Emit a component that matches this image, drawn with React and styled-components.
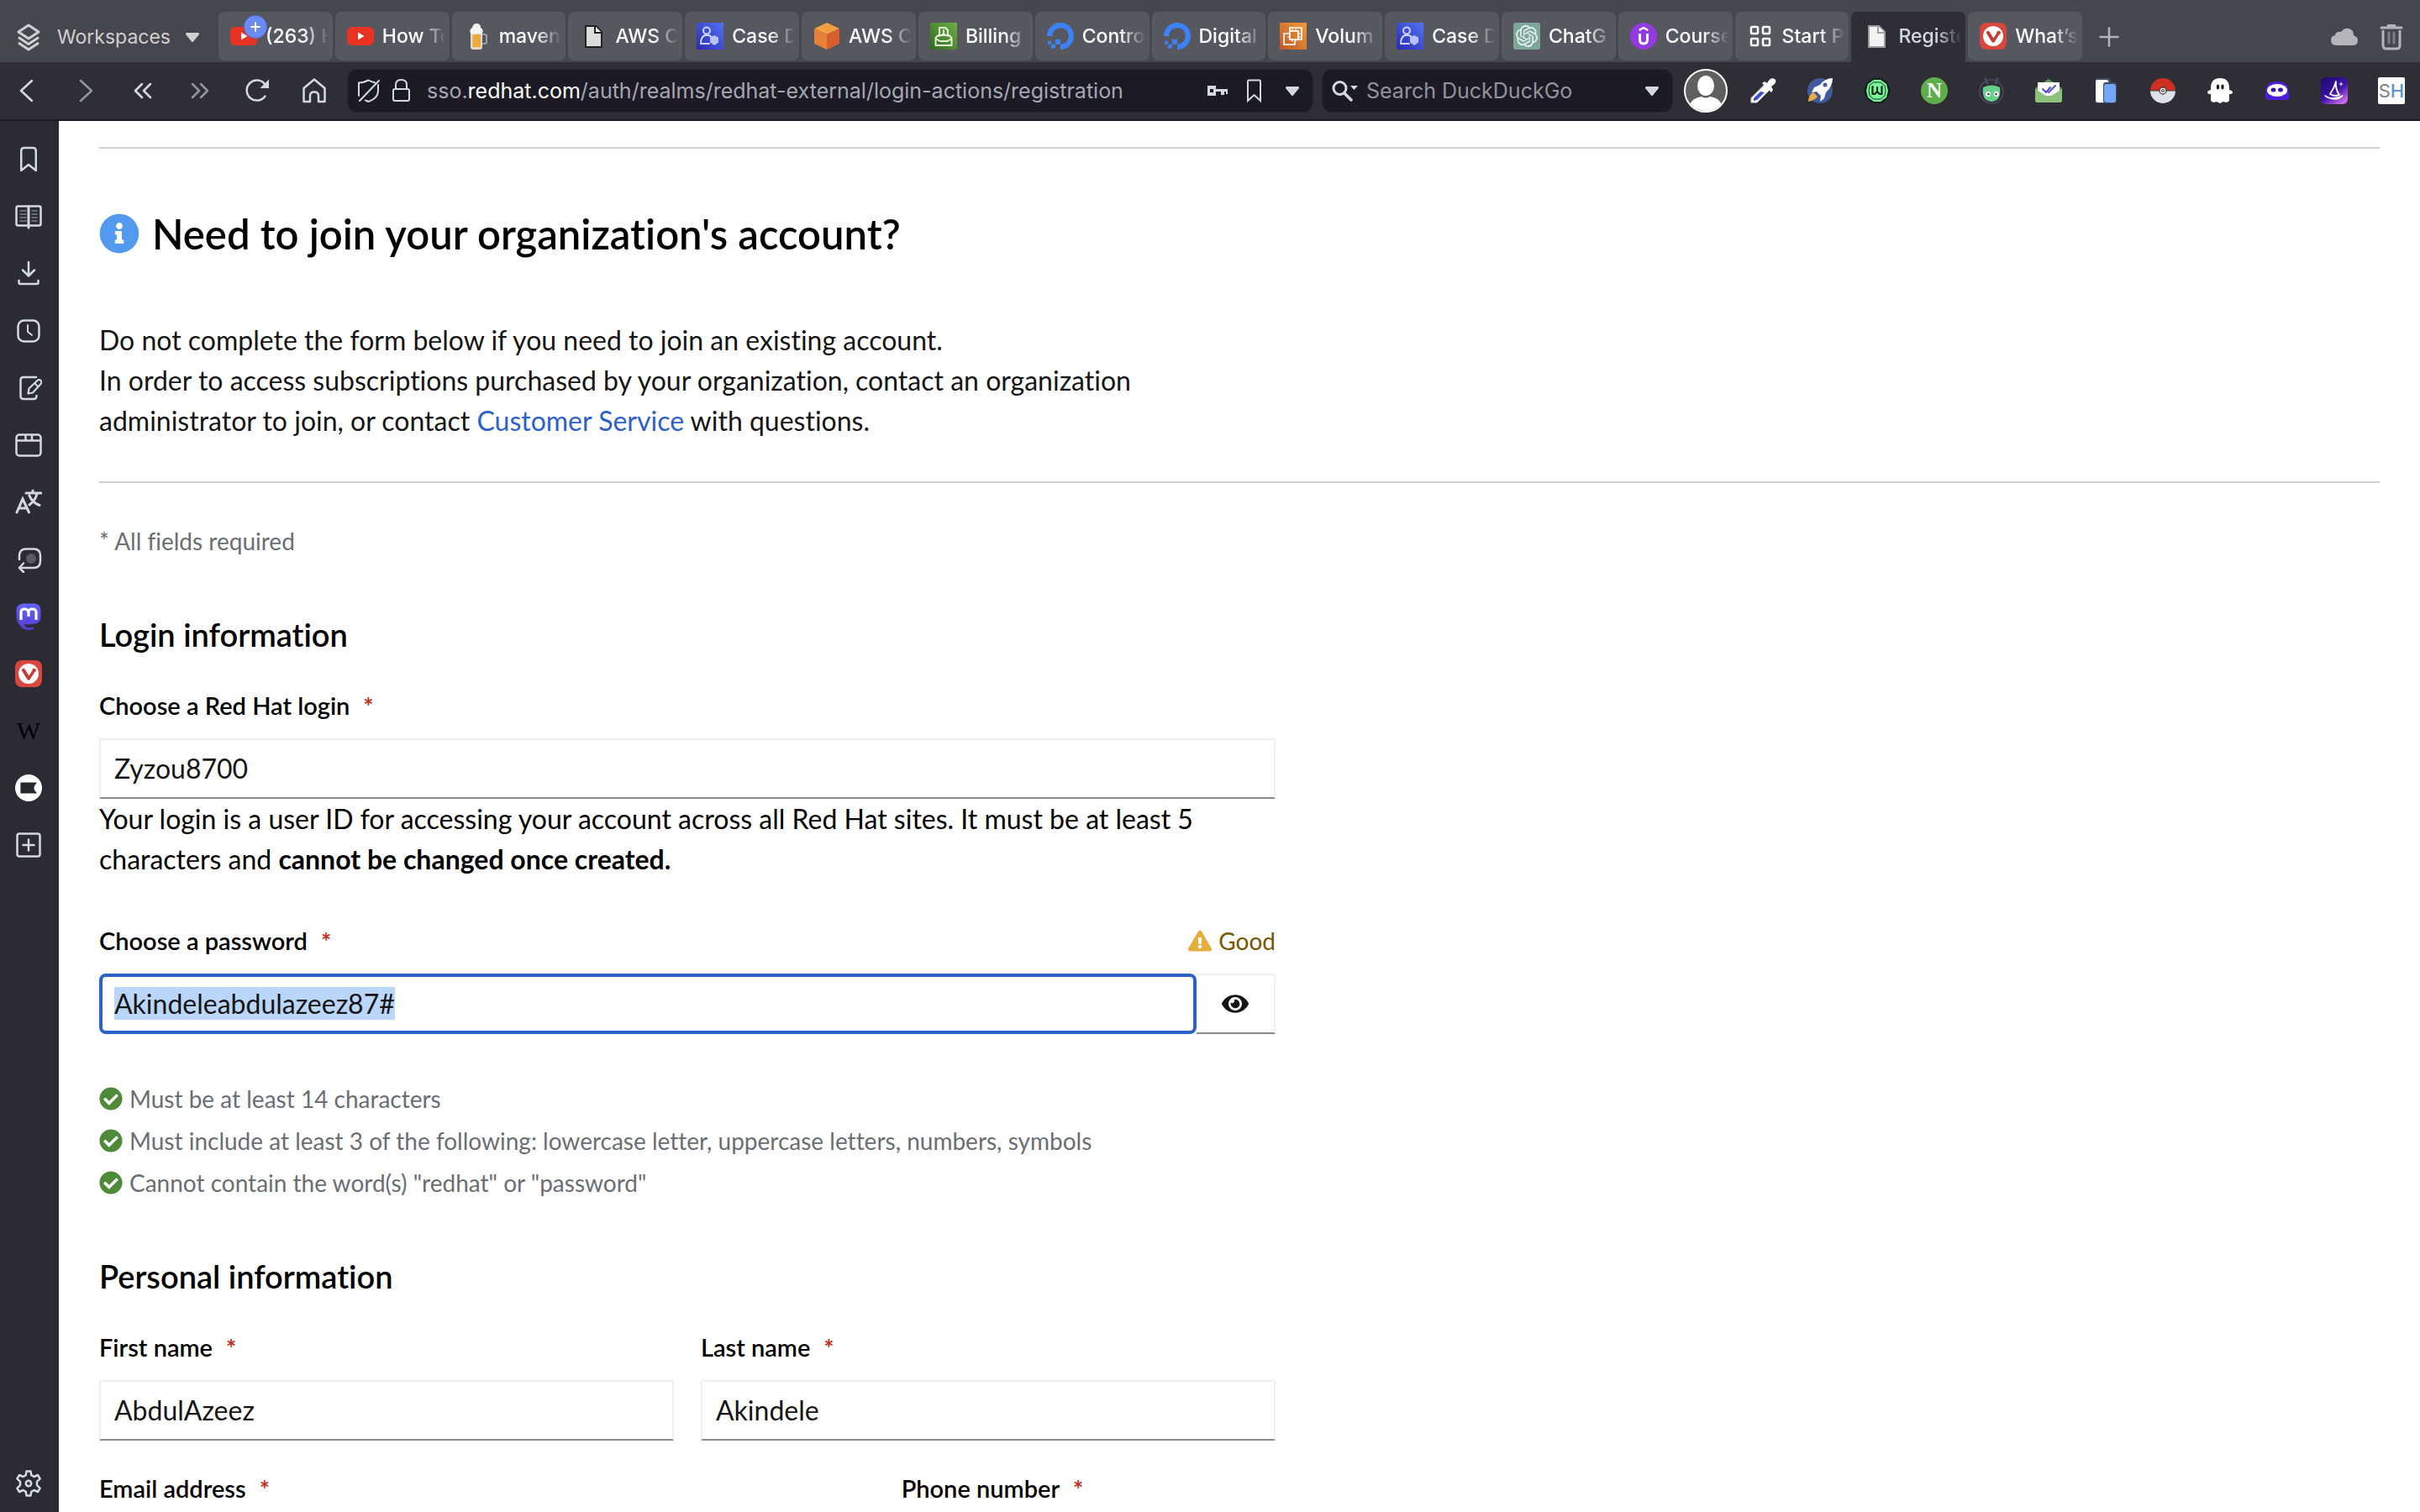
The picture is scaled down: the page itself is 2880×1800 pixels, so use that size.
import React, { useEffect, useRef } from "react";
import styled, { createGlobalStyle, css } from "styled-components";
import { FaInfoCircle, FaCheckCircle, FaExclamationTriangle, FaEye } from "react-icons/fa";
import { SiOpenai, SiDigitalocean } from "react-icons/si";

const uiFont = 'Inter, "Liberation Sans", sans-serif';
const bodyFont = 'Lato, "Open Sans", sans-serif';

const GlobalStyle = createGlobalStyle`
  *, *::before, *::after { box-sizing: border-box; }
  body { margin: 0; background: #fff; }
  button { font: inherit; color: inherit; background: none; border: 0; padding: 0; cursor: pointer; }
  h1, h2, p, ul { margin: 0; padding: 0; }
  svg { display: block; flex: none; }
`;

/* ---------- browser chrome ---------- */

const Window = styled.div`
  display: flex;
  flex-direction: column;
  height: 100vh;
  overflow: hidden;
  font-family: ${uiFont};
`;

const TabBar = styled.header`
  display: flex;
  align-items: flex-end;
  height: 74px;
  flex: none;
  background: #46464f;
  color: #b4b4b9;
`;

const Workspaces = styled.button`
  display: flex;
  align-items: center;
  width: 260px;
  height: 60px;
  padding-left: 18px;
  gap: 18px;
  font-size: 23px;
  color: #d0d0d0;
`;

const Tabs = styled.nav`
  display: flex;
  flex: 0 1 2218px;
  min-width: 0;
  gap: 3px;
`;

const Tab = styled.button`
  position: relative;
  display: flex;
  flex: 1 1 0;
  min-width: 0;
  align-items: center;
  gap: 10px;
  height: 58px;
  margin-bottom: 2px;
  padding: 0 6px 0 14px;
  border-radius: 7px;
  background: #57575f;
  color: #fff;
  font-size: 23px;
  font-weight: 500;
  text-align: left;
  ${(p) =>
    p.$active &&
    css`
      height: 60px;
      margin-bottom: 0;
      padding-bottom: 2px;
      border-radius: 7px 7px 0 0;
      background: #2f2e37;
      color: #d5d8e3;
    `}
`;

const TabTitle = styled.span`
  flex: 1;
  min-width: 0;
  overflow: hidden;
  white-space: nowrap;
  line-height: 32px;
  mask-image: linear-gradient(to right, #000 60%, transparent 102%);
`;

const Badge = styled.span`
  position: absolute;
  left: 30px;
  top: 4px;
  display: flex;
  width: 28px;
  height: 28px;
  border-radius: 50%;
  background: #6b8cf5;
  border: 1px solid #4f6fd8;
  align-items: center;
  justify-content: center;
`;

const BarButton = styled.button`
  display: flex;
  align-items: center;
  justify-content: center;
  width: ${(p) => p.$w || 64}px;
  height: 60px;
  flex: none;
`;

const Spacer = styled.div`
  flex: 1;
`;

const Toolbar = styled.div`
  display: flex;
  align-items: center;
  height: 70px;
  flex: none;
  background: #2f2e37;
  border-bottom: 2px solid #1c1b25;
  color: #d5d8e3;
`;

const NavButtons = styled.div`
  display: flex;
  flex: none;
  width: 414px;
`;

const NavButton = styled.button`
  display: flex;
  align-items: center;
  justify-content: center;
  width: 68px;
  height: 52px;
  opacity: ${(p) => (p.$dim ? 0.6 : 1)};
`;

const Field = styled.div`
  display: flex;
  align-items: center;
  height: 50px;
  border-radius: 11px;
  background: #1c1b25;
  box-shadow: 0 0 0 1px #272630;
  font-size: 25px;
`;

const AddressField = styled(Field)`
  flex: 1;
  min-width: 0;
  padding: 0 16px 0 8px;
`;

const SearchField = styled(Field)`
  flex: none;
  width: 416px;
  margin-left: 12px;
  padding: 0 16px 0 10px;
`;

const Address = styled.a`
  flex: 1;
  padding-left: 15px;
  color: #a5a7b1;
  text-decoration: none;
  white-space: nowrap;
  b {
    color: #fff;
    font-weight: 400;
  }
`;

const IconGap = styled.span`
  width: ${(p) => p.$w}px;
  flex: none;
`;

const SearchInput = styled.input`
  flex: 1;
  min-width: 0;
  margin-left: 10px;
  padding: 0;
  border: 0;
  outline: 0;
  background: none;
  font: 25px ${uiFont};
  color: #fff;
  &::placeholder {
    color: #92949d;
    opacity: 1;
  }
`;

const Extensions = styled.div`
  display: flex;
  flex: none;
  padding-left: 6px;
`;

const Extension = styled.button`
  display: flex;
  align-items: center;
  justify-content: center;
  width: 68px;
  height: 54px;
`;

const Body = styled.div`
  display: flex;
  flex: 1;
  min-height: 0;
`;

const Panel = styled.aside`
  display: flex;
  flex-direction: column;
  flex: none;
  width: 70px;
  padding: 12px 0 0;
  background: #2c2b34;
  border-right: 2px solid #292930;
  color: #d5d8e3;
`;

const PanelButton = styled.button`
  display: flex;
  align-items: center;
  justify-content: center;
  height: 68px;
  flex: none;
`;

/* ---------- page ---------- */

const Page = styled.main`
  flex: 1;
  min-width: 0;
  overflow: hidden;
  padding: 31px 48px 0;
  background: #fff;
  font-family: ${bodyFont};
  font-size: 32px;
  font-variant-ligatures: none;
  line-height: 48px;
  color: #151515;
`;

const Rule = styled.hr`
  height: 2px;
  margin: 0;
  border: 0;
  background: #d2d2d2;
`;

const Title = styled.h1`
  display: flex;
  align-items: center;
  gap: 15px;
  margin: 69px 0 71px;
  font-size: 49px;
  font-weight: 600;
  line-height: 64px;
  color: #000;
  svg {
    color: #519aef;
  }
`;

const Intro = styled.p`
  max-width: 1400px;
  margin-bottom: 48px;
`;

const Link = styled.a`
  color: #2b62c9;
  text-decoration: none;
`;

const Note = styled.p`
  margin-top: 48px;
  font-size: 28px;
  line-height: 42px;
  color: #6a6e73;
`;

const Form = styled.form`
  max-width: 1400px;
`;

const SectionTitle = styled.h2`
  margin: 66px 0 40px;
  font-size: 38px;
  font-weight: 600;
  line-height: 48px;
  color: #000;
`;

const LabelRow = styled.div`
  display: flex;
  justify-content: space-between;
  margin-top: ${(p) => p.$top || 0}px;
  margin-bottom: 18px;
  font-size: 28px;
  line-height: 42px;
`;

const Label = styled.label`
  font-size: 29px;
  font-weight: 600;
  color: #000;
  span {
    margin-left: 16px;
    font-weight: 700;
    color: #c0301c;
  }
`;

const Strength = styled.output`
  display: flex;
  align-items: center;
  gap: 8px;
  color: #795600;
  svg {
    color: #e6ad3c;
  }
`;

const inputBox = css`
  height: 72px;
  border: 2px solid #f0f0f0;
  border-bottom-color: #8a8a90;
  background: #fff;
`;

const TextInput = styled.input`
  display: block;
  width: 100%;
  min-width: 0;
  padding: 0 16px 2px;
  border-radius: 0;
  outline: 0;
  font-family: ${bodyFont};
  font-size: 32px;
  line-height: 44px;
  color: #151515;
  ${inputBox}
  &:focus {
    padding: 0 14px 2px;
    border: 4px solid #2b62c9;
    border-radius: 8px;
  }
  &::selection {
    background: #bad6fb;
    color: #151515;
  }
`;

const InputGroup = styled.div`
  display: flex;
`;

const RevealButton = styled.button`
  display: flex;
  align-items: center;
  justify-content: center;
  flex: none;
  width: 94px;
  color: #151515;
  && {
    ${inputBox}
    border-left: 0;
  }
`;

const Help = styled.p`
  color: #000;
`;

const Rules = styled.ul`
  display: grid;
  gap: 8px;
  margin-top: 56px;
  list-style: none;
  font-size: 28px;
  line-height: 42px;
  color: #6a6e73;
`;

const RuleItem = styled.li`
  display: flex;
  align-items: center;
  gap: 8px;
  svg {
    color: #4f8a3a;
  }
`;

const FieldGrid = styled.div`
  display: grid;
  grid-template-columns: repeat(12, 1fr);
  gap: 36px 32px;
`;

const Cell = styled.div`
  grid-column: span ${(p) => p.$span};
`;

/* ---------- drawings ---------- */

const Svg = ({ s = 32, w, h, vb = "0 0 32 32", sw = 2.5, children }) => (
  <svg width={w || s} height={h || s} viewBox={vb} fill="none" stroke="currentColor" strokeWidth={sw} strokeLinejoin="round" strokeLinecap="round" aria-hidden="true">
    {children}
  </svg>
);

const Caret = ({ w = 16, h = 11 }) => (
  <svg width={w} height={h} viewBox="0 0 16 11" aria-hidden="true">
    <path d="M1 0h14q1 0 1 2L9 10.500q-1 1-2 0L0 2Q0 0 1 0z" fill="currentColor" />
  </svg>
);

const Youtube = () => (
  <Svg>
    <rect x="0" y="5" width="32" height="22" rx="6" fill="#e83323" stroke="none" />
    <path d="M13 11.500v9l7.500-4.500z" fill="#fff" stroke="none" />
  </Svg>
);

const Beer = () => (
  <Svg>
    <path d="M21 14h4q2 0 2 2v7q0 2-2 2h-4" stroke="#9fa0a6" strokeWidth="2" />
    <path d="M8 10h14v19q0 3-3 3h-8q-3 0-3-3z" fill="#e3d9c6" stroke="none" />
    <path d="M10.500 14h9.500v15h-9.500z" fill="#eda93d" stroke="none" />
    <path d="M8 13q-2-5 2-7 1-5 5-5 5 0 5 5 4 2 2 7-3 1.500-5-.5-4 2.500-9 .5z" fill="#f4f4f4" stroke="none" />
  </Svg>
);

const Doc = ({ light }) => (
  <Svg>
    <path d="M7 4h12l7 7v18H7z" fill={light ? "#f3f3f3" : "#dcdcdc"} stroke={light ? "#9c9c9c" : "#222"} strokeWidth="2" strokeLinejoin="miter" />
    <path d="M18 4v8h8" fill="#fff" stroke={light ? "#9c9c9c" : "#222"} strokeWidth="2" strokeLinejoin="miter" />
  </Svg>
);

const SupportCase = () => (
  <Svg>
    <defs>
      <linearGradient id="caseFill" x1="0" y1="1" x2="1" y2="0">
        <stop offset="0" stopColor="#2a2aaf" />
        <stop offset="1" stopColor="#5273f4" />
      </linearGradient>
    </defs>
    <rect width="32" height="32" fill="url(#caseFill)" stroke="none" />
    <circle cx="12" cy="9.500" r="4" stroke="#cdd3ff" strokeWidth="2" />
    <path d="M15 25H5q0-8 5-10h5q2 1 3 3" stroke="#cdd3ff" strokeWidth="2" />
    <path d="M21 15l5 2.500v6L21 27l-5-3.500v-6z" fill="#b9c1fb" stroke="none" />
  </Svg>
);

const Cube = () => (
  <Svg>
    <path d="M16 0l15 7-15 7L1 7z" fill="#f29f45" stroke="none" />
    <path d="M1 7l15 7v18L1 25z" fill="#e68138" stroke="none" />
    <path d="M31 7l-15 7v18l15-7z" fill="#d65f2c" stroke="none" />
  </Svg>
);

const Billing = () => (
  <Svg>
    <defs>
      <linearGradient id="billFill" x1="0" y1="1" x2="1" y2="0">
        <stop offset="0" stopColor="#316a20" />
        <stop offset="1" stopColor="#6fae47" />
      </linearGradient>
    </defs>
    <rect width="32" height="32" fill="url(#billFill)" stroke="none" />
    <path d="M11 16V6h7l3 3v7M6.500 18l3-3h13l3 3M6.500 18v9h19v-9M6.500 19l5 3h9l5-3M16 9v3M14 15q2-4 4 0" stroke="#e4f2da" strokeWidth="2" />
  </Svg>
);

const Ocean = () => <SiDigitalocean size={32} color="#3b82f7" />;

const Volumes = () => (
  <Svg>
    <defs>
      <linearGradient id="volFill" x1="0" y1="1" x2="1" y2="0">
        <stop offset="0" stopColor="#bf5a28" />
        <stop offset="1" stopColor="#f09b38" />
      </linearGradient>
    </defs>
    <rect width="32" height="32" fill="url(#volFill)" stroke="none" />
    <path d="M12 10V6h14v14h-4M10 13H5v13h13v-4" stroke="#fff" strokeWidth="1.700" />
    <rect x="12" y="10" width="10" height="10" stroke="#fff" strokeWidth="1.700" />
    <path d="M15 8v2M19 8v2M15 20v2M19 20v2M10 13h2M10 17h2M22 13h2M22 17h2" stroke="#fff" strokeWidth="1.400" />
  </Svg>
);

const ChatFav = styled.span`
  display: grid;
  place-items: center;
  flex: none;
  width: 32px;
  height: 32px;
  border-radius: 3px;
  background: #7da79b;
  color: #e6f0ed;
`;

const Udemy = () => (
  <Svg>
    <circle cx="16" cy="16" r="16" fill="#933be0" stroke="none" />
    <path d="M11.500 8.500L16 6l4.500 2.500" stroke="#fff" strokeWidth="2.500" />
    <path d="M11.500 13v7q0 5 4.500 5t4.500-5v-7" stroke="#fff" strokeWidth="3" strokeLinecap="butt" />
  </Svg>
);

const Grid4 = () => (
  <Svg sw={2.5}>
    {[[5, 5], [19, 5], [5, 19], [19, 19]].map(([x, y]) => (
      <rect key={`${x}-${y}`} x={x} y={y} width="8" height="8" rx="1" />
    ))}
  </Svg>
);

const Vivaldi = () => (
  <Svg>
    <rect width="32" height="32" rx="8" fill="#d9463e" stroke="none" />
    <circle cx="16" cy="16" r="12" fill="#fff" stroke="none" />
    <path d="M10 12l6 9.500" stroke="#c73b36" strokeWidth="4.200" />
    <path d="M16.500 21.500q4-6 6-9.500" stroke="#c73b36" strokeWidth="3.400" />
    <circle cx="22.600" cy="12" r="2.200" fill="#c73b36" stroke="none" />
  </Svg>
);

const Mastodon = () => (
  <Svg>
    <defs>
      <linearGradient id="mastoFill" x1="0" y1="0" x2="0" y2="1">
        <stop offset="0" stopColor="#6364ff" />
        <stop offset="1" stopColor="#563acc" />
      </linearGradient>
    </defs>
    <path d="M9 .500h14q7.500 1 7.500 8v8q0 7-6.500 8-6 1.500-13 .5 0 4 6 4 3 0 5-.5v2.500q-3 1-6 1-7-.5-10-5-4.500-5-4.500-12V9q0-7.500 7.500-8.500z" fill="url(#mastoFill)" stroke="none" />
    <path d="M7 20v-9q0-4 4-4t5 4v5M16 11q0-4 4.500-4t4.500 4v9" stroke="#fff" strokeWidth="3.200" strokeLinecap="butt" />
  </Svg>
);

const favicons = {
  youtube: <Youtube />,
  beer: <Beer />,
  doc: <Doc />,
  docLight: <Doc light />,
  support: <SupportCase />,
  cube: <Cube />,
  billing: <Billing />,
  ocean: <Ocean />,
  volumes: <Volumes />,
  chat: (
    <ChatFav>
      <SiOpenai size={26} />
    </ChatFav>
  ),
  udemy: <Udemy />,
  grid: <Grid4 />,
  vivaldi: <Vivaldi />,
};

const tabs = [
  ["youtube", "(263) H"],
  ["youtube", "How To"],
  ["beer", "maven"],
  ["doc", "AWS C"],
  ["support", "Case D"],
  ["cube", "AWS C"],
  ["billing", "Billing"],
  ["ocean", "Contro"],
  ["ocean", "Digital"],
  ["volumes", "Volum"],
  ["support", "Case D"],
  ["chat", "ChatG"],
  ["udemy", "Course"],
  ["grid", "Start P"],
  ["docLight", "Registe"],
  ["vivaldi", "What’s"],
];

const StackIcon = () => (
  <Svg w={32} h={34} vb="0 0 32 34" sw={3}>
    <path d="M16 3l12 8-12 8-12-8z" />
    <path d="M4 17.500l12 8 12-8M4 24l12 8 12-8" strokeLinecap="butt" />
  </Svg>
);

const extensions = [
  ["Profile", (
    <svg key="p" width="54" height="54" viewBox="0 0 54 54">
      <clipPath id="face"><circle cx="27" cy="27" r="24" /></clipPath>
      <circle cx="27" cy="27" r="25" fill="#5f5f5f" stroke="#fff" strokeWidth="2" />
      <g clipPath="url(#face)" fill="#fff">
        <ellipse cx="27" cy="21" rx="10" ry="12" />
        <path d="M6 54q0-18 16-20 5 3 10 0 16 2 16 20z" />
      </g>
    </svg>
  )],
  ["Color picker", (
    <Svg>
      <path d="M18 9l6 6L9 30H2v-5z" fill="#fff" stroke="#d8d8de" strokeWidth="1" />
      <path d="M13 17l5 1-9 9-4 1v-3z" fill="#3850c8" stroke="none" />
      <path d="M15 7l3-2 3 2q4-8 9-5 4 4-4 9l2 4-2 3z" fill="#fff" stroke="none" />
    </Svg>
  )],
  ["Rocket", (
    <Svg>
      <circle cx="16" cy="16" r="15" fill="#425a9c" stroke="none" />
      <path d="M31 1q-9 0-15 8l-7 3-3 6 6-1 5 5-1 7 5-4 2-7q8-7 8-17z" fill="#fff" stroke="none" />
      <path d="M8 18q-6 3-6 11 8-2 11-6z" fill="#f0ae3e" stroke="none" />
      <circle cx="22" cy="9" r="2.500" fill="#425a9c" stroke="none" />
    </Svg>
  )],
  ["Shield W", (
    <Svg>
      <path d="M11 1h10l8 6 3 9-3 9-8 6H11l-8-6-3-9 3-9z" fill="#0d2119" stroke="none" />
      <path d="M12 3h8l7 5 2 8-2 8-7 5h-8l-7-5-2-8 2-8z" fill="#7cf596" stroke="none" />
      <path d="M12 6h8l5 4 1 6-1 6-5 4h-8l-5-4-1-6 1-6z" stroke="#163324" strokeWidth="1" />
      <path d="M10.500 11v9h2.500l3-3 3 3h2.500v-9M16 12v5" stroke="#132c20" strokeWidth="2.200" />
    </Svg>
  )],
  ["Notes", (
    <Svg>
      <circle cx="16" cy="16" r="16" fill="#5fae4b" stroke="none" />
      <text x="16" y="24" textAnchor="middle" fontFamily="Liberation Serif, serif" fontSize="25" fontWeight="700" fill="#fff" stroke="none">N</text>
    </Svg>
  )],
  ["Bug", (
    <Svg>
      <ellipse cx="16" cy="17" rx="14" ry="14" stroke="#474c60" strokeWidth="1.500" />
      <path d="M11 7L9 2M21 7l2-5" stroke="#474c60" strokeWidth="3" />
      <path d="M6 12q10-5 20 0 2 16-10 17Q4 28 6 12z" fill="#67d08a" stroke="none" />
      <circle cx="12" cy="20" r="3" fill="#fff" stroke="none" />
      <circle cx="22" cy="20" r="3" fill="#fff" stroke="none" />
      <circle cx="12.500" cy="20" r="1.200" fill="#222" stroke="none" />
      <circle cx="21.500" cy="20" r="1.200" fill="#222" stroke="none" />
    </Svg>
  )],
  ["Mail tracker", (
    <Svg>
      <path d="M0 13L16 2l16 11v14q0 3-3 3H3q-3 0-3-3z" fill="#5f9b5d" stroke="none" />
      <path d="M3 6h26v14l-13 6-13-6z" fill="#fff" stroke="none" />
      <path d="M0 14l13 8h6l13-8v13q0 3-3 3H3q-3 0-3-3z" fill="#8cc27e" stroke="none" />
      <path d="M9 14l4 4 5-6M16 18l8-8" stroke="#4f4fd0" strokeWidth="2" />
    </Svg>
  )],
  ["Devices", (
    <Svg>
      <rect x="4" y="1" width="18" height="30" rx="3" fill="#434a66" stroke="none" />
      <rect x="4" y="3" width="15" height="27" rx="2" fill="#fff" stroke="none" />
      <rect x="13" y="6" width="16" height="25" rx="3" fill="#434a66" stroke="none" />
      <rect x="14" y="8" width="14" height="22" rx="3" fill="#74a6f6" stroke="none" />
    </Svg>
  )],
  ["Pokeball", (
    <Svg>
      <path d="M1 16a15 15 0 0 1 30 0z" fill="#cf2f22" stroke="none" />
      <path d="M1 16a15 15 0 0 0 30 0z" fill="#dde2e8" stroke="none" />
      <path d="M1 16h30" stroke="#3a3a3a" strokeWidth="1" />
      <circle cx="16" cy="16" r="4" fill="#f1f1f1" stroke="#444" strokeWidth="1.300" />
      <circle cx="16" cy="16" r="1.500" stroke="#444" strokeWidth="1" />
    </Svg>
  )],
  ["Ghost", (
    <Svg>
      <path d="M5 13Q5 1 16 1t11 12v2q4 1 4 3t-4 2v8l-3 2-4-1-4 2-4-2-4 1-3-2v-8q-4 0-4-2t4-3z" fill="#fff" stroke="none" />
      <ellipse cx="13.500" cy="11.500" rx="1.700" ry="3" fill="#222" stroke="none" />
      <ellipse cx="19" cy="11.500" rx="1.700" ry="3" fill="#222" stroke="none" />
    </Svg>
  )],
  ["Mask", (
    <Svg>
      <path d="M2 18Q2 5 16 5t14 14q3 8-5 8H7q-7 0-5-9z" fill="#4b1fd8" stroke="none" />
      <ellipse cx="16" cy="15.500" rx="12" ry="7.500" fill="#fff" stroke="none" />
      <ellipse cx="11.500" cy="15" rx="3" ry="2.500" fill="#3714b0" stroke="none" />
      <ellipse cx="20" cy="15" rx="3" ry="2.500" fill="#3714b0" stroke="none" />
    </Svg>
  )],
  ["Wizard", (
    <Svg>
      <defs>
        <linearGradient id="wizFill" x1="0" y1="0" x2=".7" y2="1">
          <stop offset="0" stopColor="#1a0a6b" />
          <stop offset=".6" stopColor="#3b12a5" />
          <stop offset="1" stopColor="#c569e8" />
        </linearGradient>
      </defs>
      <rect width="32" height="32" rx="6" fill="url(#wizFill)" stroke="none" />
      <path d="M18 5q-1 9 4 16-6 2-11-1 5-7 7-15z" stroke="#fff" strokeWidth="1.800" />
      <path d="M5 22q7 6 21 0-8 8-21 0z" fill="#fff" stroke="#fff" strokeWidth="1.500" />
      <path d="M24 6v4M22 8h4" stroke="#e4d4ff" strokeWidth="1.200" />
    </Svg>
  )],
  ["SH", (
    <Svg>
      <rect width="32" height="32" rx="2" fill="#fff" stroke="none" />
      <text x="16" y="24" textAnchor="middle" fontFamily="Inter, sans-serif" fontSize="22" fill="#7d8087" stroke="none">
        S<tspan fill="#5b93cf" fontWeight="500">H</tspan>
      </text>
    </Svg>
  )],
];

const panels = [
  ["Bookmarks", <Svg key="i"><path d="M6.500 29V5.500q0-3.500 3.500-3.500h10.500q3.500 0 3.500 3.500V29L15.250 22z" transform="translate(.75 0)" /></Svg>],
  ["Reading list", (
    <Svg key="i">
      <rect x="1.500" y="3.500" width="29" height="23" rx="2" />
      <path d="M16 4v25" strokeWidth="3" />
      <path d="M6 9h7M6 13h7M6 17h7M6 21h7M20 9h6M20 13h6M20 17h6M20 21h6" strokeWidth="1.600" opacity=".5" />
    </Svg>
  )],
  ["Downloads", <Svg key="i"><path d="M16 2v16M9 11.500l7 7 7-7M4.500 24v2.500q0 1.500 1.500 1.500h20q1.500 0 1.500-1.500V24" /></Svg>],
  ["History", <Svg key="i"><rect x="3.500" y="3.500" width="25" height="25" rx="7" /><path d="M15 9v8l5 4" strokeWidth="2" /></Svg>],
  ["Notes", (
    <Svg key="i">
      <path d="M25 3H10Q6.500 3 6.500 6.500v19Q6.500 29 10 29h12q3.500 0 3.500-4" />
      <path d="M15.500 22.500l1-6L27 6.500q2-1 3.500.5t.5 3.500L21 21.500z" strokeWidth="2.200" />
      <path d="M24 11l3 3" strokeWidth="2" />
    </Svg>
  )],
  ["Window", <Svg key="i"><rect x="1.500" y="3.500" width="29" height="25" rx="3.500" /><path d="M2 10.500h28M12.500 4v6M20 4v6" /></Svg>],
  ["Translate", (
    <Svg key="i" sw={3}>
      <path d="M2 28L9 12 16.500 28M4.500 23h9" strokeLinejoin="miter" />
      <path d="M13 5h18M21 2v3M26 6q-2 8-9 13M17 8q3 8 12 11.500" />
    </Svg>
  )],
  ["Sessions", (
    <Svg key="i">
      <path d="M5 16v-4q0-8.500 8-8.500h9q8 0 8 8V18q0 8-8 8H5.500" />
      <path d="M10 20.500L5 26l5 5" />
      <circle cx="19" cy="15" r="6" fill="#5a5964" stroke="none" />
    </Svg>
  )],
  ["Mastodon", <Mastodon key="i" />],
  ["Vivaldi", <Vivaldi key="i" />],
  ["Wikipedia", (
    <Svg key="i">
      <text x="16" y="26" textAnchor="middle" fontFamily="Liberation Serif, serif" fontSize="30" fill="#000" stroke="none">W</text>
    </Svg>
  )],
  ["Feed", (
    <Svg key="i">
      <circle cx="16" cy="16" r="16" fill="#fff" stroke="none" />
      <path d="M7 10h18q-6.500 6 0 12H7z" fill="#26282c" stroke="#26282c" strokeWidth="1.200" />
    </Svg>
  )],
  ["Add panel", <Svg key="i"><rect x="2.500" y="2.500" width="27" height="27" rx="2.500" /><path d="M16 9.500v13M9.500 16h13" /></Svg>],
];

const Gear = () => (
  <Svg sw={2.5}>
    <path d="M13.500 1.500h5l.8 4.700 3.200 1.800 4.500-2 2.600 4.400L26 13.800v4.400l3.600 3.400L27 26l-4.500-2-3.200 1.800-.8 4.700h-5l-.8-4.700L9.500 24 5 26l-2.600-4.400L6 18.200v-4.400L2.400 10.400 5 6l4.500 2 3.200-1.800z" />
    <circle cx="16" cy="16" r="3.200" />
  </Svg>
);

const FormField = ({ id, label, value, span }) => (
  <Cell $span={span}>
    <LabelRow>
      <Label htmlFor={id}>
        {label}
        <span>*</span>
      </Label>
    </LabelRow>
    <TextInput id={id} defaultValue={value} spellCheck={false} />
  </Cell>
);

export default function App() {
  const password = useRef(null);

  useEffect(() => {
    password.current.focus({ preventScroll: true });
    password.current.select();
  }, []);

  return (
    <Window>
      <GlobalStyle />
      <TabBar>
        <Workspaces>
          <StackIcon />
          Workspaces
          <Caret />
        </Workspaces>
        <Tabs>
          {tabs.map(([icon, title], i) => (
            <Tab key={i} $active={icon === "docLight"}>
              {favicons[icon]}
              {i === 0 && (
                <Badge>
                  <Svg s={14} vb="0 0 14 14" sw={2}>
                    <path d="M7 2v10M2 7h10" />
                  </Svg>
                </Badge>
              )}
              <TabTitle>{title}</TabTitle>
            </Tab>
          ))}
        </Tabs>
        <BarButton aria-label="New tab">
          <Svg s={24} vb="0 0 24 24">
            <path d="M12 1.500v21M1.500 12h21" />
          </Svg>
        </BarButton>
        <Spacer />
        <BarButton $w={44} aria-label="Synced tabs">
          <Svg>
            <path d="M7 26q-7 0-7-6 0-5 5-6 1-5 7-4 4-5 9-4 6 1 6 8 5 2 5 6 0 6-6 6z" fill="currentColor" stroke="none" />
          </Svg>
        </BarButton>
        <BarButton $w={68} aria-label="Closed tabs">
          <Svg sw={3}>
            <path d="M4 5h24M12 2.500h8M6 9v17q0 4 4 4h12q4 0 4-4V9" />
            <path d="M13 11v12M19 11v12" opacity=".5" />
          </Svg>
        </BarButton>
      </TabBar>

      <Toolbar>
        <NavButtons>
          <NavButton aria-label="Back"><Svg><path d="M20 4L7 16l13 12" /></Svg></NavButton>
          <NavButton $dim aria-label="Forward"><Svg><path d="M10 4l13 12-13 12" /></Svg></NavButton>
          <NavButton aria-label="Rewind"><Svg><path d="M15 8l-8 8 8 8M25 8l-8 8 8 8" /></Svg></NavButton>
          <NavButton $dim aria-label="Fast forward"><Svg><path d="M7 8l8 8-8 8M17 8l8 8-8 8" /></Svg></NavButton>
          <NavButton aria-label="Reload">
            <Svg>
              <path d="M25.500 22.500A12 12 0 1 1 25 8" />
              <path d="M30 2.500V13H19.500z" fill="currentColor" stroke="none" />
            </Svg>
          </NavButton>
          <NavButton aria-label="Home"><Svg><path d="M3.500 13L16 2.500 28.500 13v16H21v-7q0-4.500-5-4.500T11 22v7H3.500z" /></Svg></NavButton>
        </NavButtons>
        <AddressField>
          <Svg sw={2}>
            <path d="M5 22V6.500q6 0 11.500-3Q20 5.500 24 6.200M28 9v7q0 9-11.500 13L13 27.500M29 4L6 28" />
          </Svg>
          <IconGap $w={7} />
          <Svg sw={2}>
            <rect x="7" y="14" width="19" height="14" rx="2" />
            <path d="M10 14V9q0-6 6.500-6T23 9v5" />
          </Svg>
          <Address href="#form">
            sso.<b>redhat.com</b>/auth/realms/redhat-external/login-actions/registration
          </Address>
          <Svg>
            <path d="M4 10h10v4h14v6h-2v-3h-2v4h-4v-4h-6v5H4zM7 14v4h4v-4z" fill="currentColor" fillRule="evenodd" stroke="none" />
          </Svg>
          <IconGap $w={11} />
          <Svg sw={2}><path d="M9 28V5q0-1.500 1.500-1.500h12Q24 3.500 24 5v23l-7.500-7z" strokeLinejoin="miter" /></Svg>
          <IconGap $w={22} />
          <Caret />
        </AddressField>
        <SearchField>
          <Svg w={32}>
            <circle cx="10.500" cy="13" r="7.500" strokeWidth="3" />
            <path d="M16 19l8 8" strokeWidth="3.500" />
            <path d="M23 10h9l-4.500 5z" fill="currentColor" stroke="none" />
          </Svg>
          <SearchInput aria-label="Search" placeholder="Search DuckDuckGo" />
          <Caret />
        </SearchField>
        <Extensions>
          {extensions.map(([name, icon]) => (
            <Extension key={name} aria-label={name}>
              {icon}
            </Extension>
          ))}
        </Extensions>
      </Toolbar>

      <Body>
        <Panel>
          {panels.map(([name, icon]) => (
            <PanelButton key={name} aria-label={name}>
              {icon}
            </PanelButton>
          ))}
          <Spacer />
          <PanelButton aria-label="Settings">
            <Gear />
          </PanelButton>
        </Panel>

        <Page>
          <Rule />
          <Title>
            <FaInfoCircle size={48} />
            Need to join your organization's account?
          </Title>
          <Intro>
            Do not complete the form below if you need to join an existing account.
            <br />
            In order to access subscriptions purchased by your organization, contact an organization
            <br />
            administrator to join, or contact <Link href="#service">Customer Service</Link> with questions.
          </Intro>
          <Rule />
          <Note>* All fields required</Note>

          <Form id="form">
            <SectionTitle>Login information</SectionTitle>
            <LabelRow>
              <Label htmlFor="login">
                Choose a Red Hat login
                <span>*</span>
              </Label>
            </LabelRow>
            <TextInput id="login" defaultValue="Zyzou8700" spellCheck={false} />
            <Help>
              Your login is a user ID for accessing your account across all Red Hat sites. It must be at least 5
              <br />
              characters and <strong>cannot be changed once created.</strong>
            </Help>

            <LabelRow $top={52}>
              <Label htmlFor="password">
                Choose a password
                <span>*</span>
              </Label>
              <Strength htmlFor="password">
                <FaExclamationTriangle size={28} />
                Good
              </Strength>
            </LabelRow>
            <InputGroup>
              <TextInput id="password" ref={password} defaultValue="Akindeleabdulazeez87#" spellCheck={false} />
              <RevealButton type="button" aria-label="Hide password">
                <FaEye size={32} />
              </RevealButton>
            </InputGroup>
            <Rules>
              {[
                "Must be at least 14 characters",
                "Must include at least 3 of the following: lowercase letter, uppercase letters, numbers, symbols",
                'Cannot contain the word(s) "redhat" or "password"',
              ].map((text) => (
                <RuleItem key={text}>
                  <FaCheckCircle size={28} />
                  {text}
                </RuleItem>
              ))}
            </Rules>

            <SectionTitle>Personal information</SectionTitle>
            <FieldGrid>
              <FormField id="first" label="First name" value="AbdulAzeez" span={6} />
              <FormField id="last" label="Last name" value="Akindele" span={6} />
              <FormField id="email" label="Email address" span={8} />
              <FormField id="phone" label="Phone number" span={4} />
            </FieldGrid>
          </Form>
        </Page>
      </Body>
    </Window>
  );
}
